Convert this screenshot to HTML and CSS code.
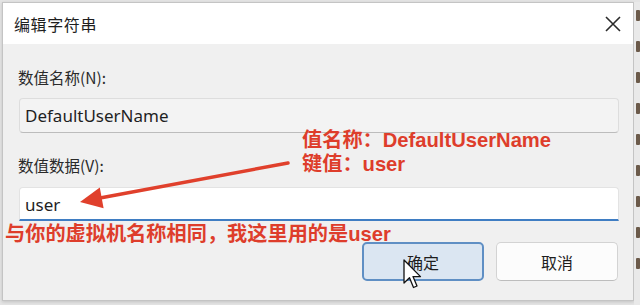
FILE: index.html
```html
<!DOCTYPE html>
<html lang="zh-CN">
<head>
<meta charset="utf-8">
<title>编辑字符串</title>
<link rel="stylesheet" href="styles.css">
</head>
<body>
<div class="screen">
  <div class="dialog">
    <div class="titlebar">
      <span class="title">编辑字符串</span>
      <svg class="close" width="16" height="16" viewBox="0 0 16 16"><path d="M1 1 L15 15 M15 1 L1 15" stroke="#2b2b2b" stroke-width="1.6" fill="none"/></svg>
    </div>
    <div class="body">
      <div class="label">数值名称(N):</div>
      <div class="field field-disabled">DefaultUserName</div>
      <div class="label label-2">数值数据(V):</div>
      <div class="field field-active">user</div>
      <div class="buttons">
        <button class="btn btn-primary">确定</button>
        <button class="btn">取消</button>
      </div>
    </div>
  </div>
  <div class="side">
    <span class="tile"></span><span class="tile"></span><span class="tile"></span><span class="tile"></span><span class="tile"></span><span class="tile"></span><span class="tile"></span><span class="tile"></span><span class="tile"></span>
  </div>

  <div class="note note-1">值名称：DefaultUserName<br>键值：user</div>
  <div class="note note-2">与你的虚拟机名称相同，我这里用的是user</div>

  <svg class="arrow" width="640" height="305" viewBox="0 0 640 305">
    <line x1="288" y1="163" x2="100" y2="198" stroke="#e0402c" stroke-width="3.5" stroke-linecap="round"/>
    <polygon points="80,202 99.8,187.5 103.6,208.3" fill="#e0402c"/>
  </svg>

  <svg class="cursor" width="22" height="32" viewBox="0 0 22 32">
    <path d="M1 1 L1 24 L6.5 18.8 L10.5 28.5 L14 27 L10 17.6 L17.5 17.6 Z" fill="#ffffff" stroke="#111111" stroke-width="1.3" stroke-linejoin="round"/>
  </svg>
</div>
</body>
</html>
```

FILE: styles.css
```css
* { box-sizing: border-box; }

html, body {
  margin: 0;
  padding: 0;
}

body {
  width: 640px;
  height: 305px;
  overflow: hidden;
  font-family: "Noto Sans", "Noto Sans CJK SC", sans-serif;
}

.screen {
  position: relative;
  width: 640px;
  height: 305px;
  display: flex;
  padding: 2px 0 0 2px;
  background: #e4e4e4;
}

.dialog {
  width: 632px;
  height: 299px;
  border: 1px solid #c4c4c4;
  display: flex;
  flex-direction: column;
  box-shadow: 0 1px 3px rgba(0, 0, 0, 0.15);
}

.titlebar {
  height: 41px;
  background: #ffffff;
  display: flex;
  align-items: center;
  justify-content: space-between;
  padding: 0 12px 0 11px;
}

.title {
  font-family: "Noto Sans CJK SC", sans-serif;
  font-size: 16px;
  color: #1e1e1e;
  letter-spacing: 0.6px;
}

.close {
  display: block;
}

.body {
  flex: 1;
  background: #f0f0f0;
  padding: 22px 14px 0 16px;
  display: flex;
  flex-direction: column;
}

.label {
  font-family: "Noto Sans CJK SC", sans-serif;
  font-size: 15.5px;
  line-height: 22px;
  color: #2a2a2a;
  margin-left: -1px;
}

.label-2 {
  margin-top: 21px;
}

.field {
  margin-top: 10px;
  height: 35px;
  padding: 0 5px;
  display: flex;
  align-items: center;
  font-size: 17px;
  color: #1f1f1f;
  border-radius: 4px;
}

.field-disabled {
  background: #f3f3f3;
  border: 1px solid #dddddd;
  border-bottom-color: #bcbcbc;
}

.field-active {
  margin-top: 11px;
  height: 34px;
  background: #ffffff;
  border: 1px solid #e3e3e3;
  border-bottom: 2px solid #3f7dc3;
  border-radius: 4px 4px 0 0;
  padding-top: 1px;
}

.buttons {
  display: flex;
  justify-content: flex-end;
  gap: 12px;
  margin-top: 21px;
  padding-right: 1px;
}

.btn {
  width: 122px;
  height: 39px;
  border-radius: 5px;
  font-family: "Noto Sans CJK SC", sans-serif;
  font-size: 16px;
  color: #1e1e1e;
  background: #fcfcfc;
  border: 1px solid #d3d3d3;
  border-bottom-color: #bdbdbd;
  padding: 0;
}

.btn-primary {
  background: #dbe6f2;
  border: 2px solid #5f8fc4;
}

.side {
  flex: 1;
  display: flex;
  flex-direction: column;
  align-items: flex-end;
  gap: 20px;
  padding-top: 8px;
  background: #e9e9e9;
}

.tile {
  width: 4px;
  height: 11px;
  background: #6b5a4a;
  border-radius: 1px;
}

.note {
  position: absolute;
  font-family: "Liberation Sans", "Noto Sans CJK SC", sans-serif;
  font-weight: bold;
  color: #de3d2b;
  font-size: 20.2px;
  line-height: 24px;
  white-space: nowrap;
}

.note-1 {
  left: 302px;
  top: 128px;
}

.note-2 {
  left: 5px;
  top: 222px;
}

.arrow {
  position: absolute;
  left: 0;
  top: 0;
  pointer-events: none;
}

.cursor {
  position: absolute;
  left: 403px;
  top: 259px;
}
```
